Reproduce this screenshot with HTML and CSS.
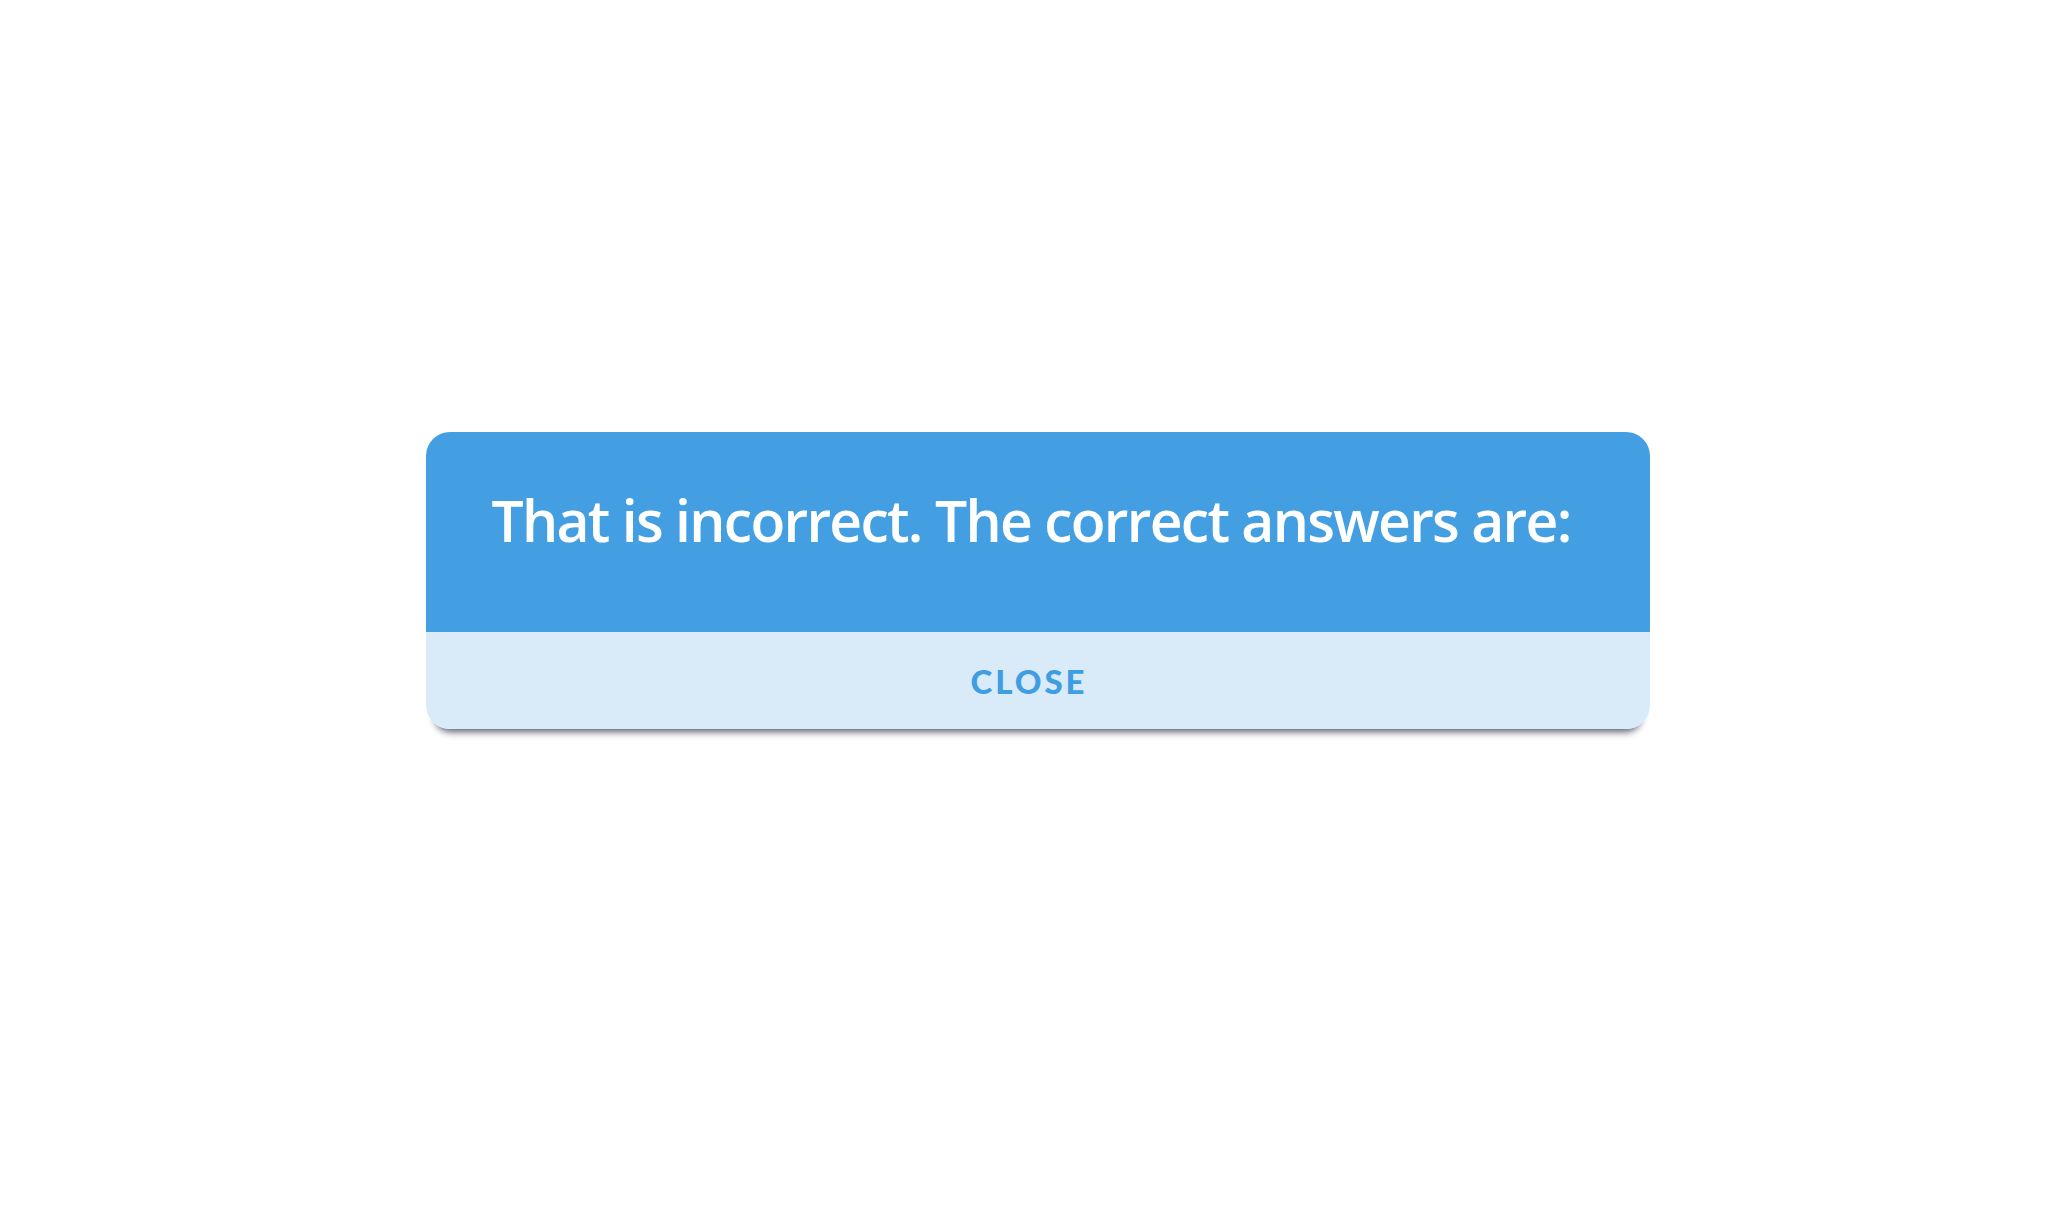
FILE: index.html
```html
<!DOCTYPE html>
<html lang="en">
<head>
<meta charset="utf-8">
<title>Incorrect</title>
<link rel="stylesheet" href="styles.css">
</head>
<body>
<main class="stage">
  <section class="dialog">
    <header class="dialog-head">
      <h1 class="dialog-title">That is incorrect. The correct answers are:</h1>
    </header>
    <footer class="dialog-foot">
      <button class="close-btn" type="button">CLOSE</button>
    </footer>
  </section>
</main>
</body>
</html>
```
FILE: styles.css
```css
html, body {
  margin: 0;
  padding: 0;
  background: #ffffff;
}
.stage {
  width: 2048px;
  height: 1216px;
  box-sizing: border-box;
  padding: 432px 0 0 426px;
}
.dialog {
  width: 1224px;
  border-radius: 24px;
  overflow: hidden;
  box-shadow: 0 12px 7px -9px rgba(55, 55, 80, 0.8);
}
.dialog-head {
  height: 200px;
  box-sizing: border-box;
  background: #439fe2;
  padding: 53px 14px 0 0;
  text-align: center;
}
.dialog-title {
  margin: 0;
  font-family: "Open Sans", "Noto Sans", sans-serif;
  font-weight: 600;
  font-size: 57px;
  line-height: 70px;
  letter-spacing: -1.7px;
  color: #ffffff;
}
.dialog-foot {
  height: 97px;
  box-sizing: border-box;
  padding-right: 18px;
  background: #d9ebf9;
  display: flex;
  align-items: center;
  justify-content: center;
}
.close-btn {
  border: 0;
  background: none;
  padding: 0;
  font-family: "Lato", "Noto Sans", sans-serif;
  font-weight: 900;
  font-size: 33px;
  letter-spacing: 3px;
  color: #3f9de1;
  cursor: pointer;
}
```
